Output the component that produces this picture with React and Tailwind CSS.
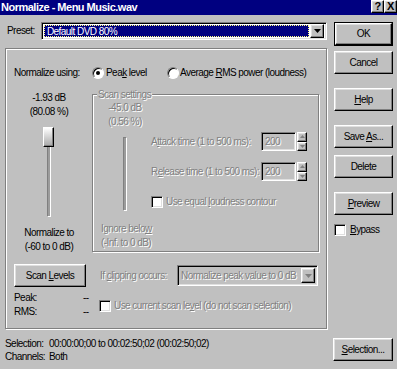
import React from 'react';

const raised =
  'border border-t-white border-l-white border-r-black border-b-black shadow-[inset_-1px_-1px_0_#808080,inset_1px_1px_0_#dfdfdf] bg-[#c0c0c0]';
const sunken =
  'border border-t-[#808080] border-l-[#808080] border-r-white border-b-white shadow-[inset_1px_1px_0_#000,inset_-1px_-1px_0_#dfdfdf]';
const etched = 'border border-[#808080] shadow-[1px_1px_0_#fff,inset_1px_1px_0_#fff]';
const dis = 'text-[#808080] [text-shadow:1px_1px_0_#fff]';

const Btn = ({ children, className = '' }) => (
  <div className={`${raised} flex items-center justify-center ${className}`}>{children}</div>
);

const Check = ({ className = '' }) => (
  <div className={`${sunken} w-[12px] h-[12px] bg-white shrink-0 ${className}`} />
);

const Radio = ({ on }) => (
  <div className="w-[12px] h-[12px] shrink-0 rounded-full bg-white border border-t-[#808080] border-l-[#808080] border-r-white border-b-white shadow-[inset_1px_1px_0_#000] flex items-center justify-center">
    {on && <div className="w-[4px] h-[4px] rounded-full bg-black" />}
  </div>
);

const Arrow = ({ color = '#000' }) => (
  <svg width="7" height="4" viewBox="0 0 7 4">
    <path d="M0 0h7L3.5 4z" fill={color} />
  </svg>
);

const Spin = () => (
  <div className="flex flex-col w-[10px] h-[19px] ml-[1px]">
    <div className={`${raised} flex-1 flex items-center justify-center`}>
      <svg width="5" height="3" viewBox="0 0 5 3"><path d="M0 3h5L2.5 0z" fill="#808080" /></svg>
    </div>
    <div className={`${raised} flex-1 flex items-center justify-center`}>
      <svg width="5" height="3" viewBox="0 0 5 3"><path d="M0 0h5L2.5 3z" fill="#808080" /></svg>
    </div>
  </div>
);

const SpinField = () => (
  <div className="flex items-center">
    <div className={`${sunken} w-[35px] h-[19px] bg-[#c0c0c0] pl-[3px] leading-[17px] ${dis}`}>200</div>
    <Spin />
  </div>
);

const Slider = ({ disabled, h }) => (
  <div className="relative mx-auto w-[4px]" style={{ height: h }}>
    <div className="w-[4px] h-full bg-[#9c9c9c] border-l border-t border-[#808080] border-r border-r-white border-b border-b-white" />
    {!disabled && (
      <div className="absolute top-[-1px] left-[-4px] w-[11px] h-[20px] border border-t-white border-l-white border-r-black border-b-black bg-gradient-to-b from-white to-[#a8a8a8] shadow-[inset_-1px_-1px_0_#808080]" />
    )}
  </div>
);

export default function App() {
  return (
    <div className="w-[397px] h-[369px] bg-[#c0c0c0] overflow-hidden flex flex-col whitespace-nowrap text-[10px] tracking-[-0.55px] leading-[14px] text-black font-['Liberation_Sans',Arial,sans-serif]">
      {/* title bar */}
      <div className="h-[15px] bg-[#000080] flex justify-between shrink-0">
        <div className="pl-[1px] text-white font-bold leading-[14px] text-[11px] tracking-[-0.5px]">Normalize - Menu Music.wav</div>
        <div className="flex">
          <Btn className="w-[13px] h-[13px] font-bold text-[11px] leading-none">?</Btn>
          <Btn className="w-[13px] h-[13px] font-bold text-[11px] leading-none">X</Btn>
        </div>
      </div>

      <div className="flex flex-1">
        {/* left column */}
        <div className="ml-[5px] w-[322px] flex flex-col">
          <div className="mt-[7px] h-[18px] flex items-center">
            <div className="w-[36px] pl-[2px]">Preset:</div>
            <div className={`${sunken} w-[287px] h-[18px] bg-white flex items-center p-[2px]`}>
              <div className="flex-1 h-full bg-[#000080] border border-dotted border-[#ffff80] text-white pl-[2px] leading-[12px]">
                Default DVD 80%
              </div>
              <Btn className="w-[14px] h-[14px] ml-[1px]"><Arrow /></Btn>
            </div>
          </div>

          {/* main group */}
          <div className={`${etched} mt-[8px] h-[281px] w-[322px]`}>
            <div className="mt-[17px] h-[14px] flex items-center pl-[8px]">
              <div className="w-[78px]">Normalize using:</div>
              <div className="w-[75px] flex items-center">
                <Radio on />
                <span className="ml-[2px]">Pea<u>k</u> level</span>
              </div>
              <div className="flex items-center">
                <Radio />
                <span className="ml-[1px]">Average <u>R</u>MS power (loudness)</span>
              </div>
            </div>

            <div className="h-[174px] flex">
              {/* level slider */}
              <div className="w-[86px] pt-[11px] text-center">
                <div>-1.93 dB</div>
                <div>(80.08 %)</div>
                <div className="mt-[9px]"><Slider h={89} /></div>
                <div className="mt-[9px]">Normalize to</div>
                <div>(-60 to 0 dB)</div>
              </div>

              {/* scan settings */}
              <div className={`${etched} relative mt-[14px] h-[158px] w-[227px] flex`}>
                <div className={`absolute top-[-7px] left-[4px] px-[1px] bg-[#c0c0c0] ${dis}`}>Scan settings</div>
                <div className={`w-[58px] pt-[6px] ${dis}`}>
                  <div className="pl-[6px] text-center">-45.0 dB</div>
                  <div className="pl-[6px] text-center">(0.56 %)</div>
                  <div className="mt-[8px] pl-[6px]"><Slider disabled h={74} /></div>
                  <div className="mt-[11px] pl-[8px]">Ignore belo<u>w</u></div>
                  <div className="pl-[8px]">(-Inf. to 0 dB)</div>
                </div>
                <div className="flex-1 pt-[37px]">
                  <div className="flex items-center h-[19px]">
                    <div className={`w-[110px] ${dis}`}>A<u>t</u>tack time (1 to 500 ms):</div>
                    <SpinField />
                  </div>
                  <div className="flex items-center h-[19px] mt-[11px]">
                    <div className={`w-[110px] ${dis}`}>R<u>e</u>lease time (1 to 500 ms):</div>
                    <SpinField />
                  </div>
                  <div className="flex items-center mt-[14px]">
                    <Check className="bg-[#c0c0c0]" />
                    <span className={`ml-[3px] ${dis}`}>Use equal <u>l</u>oudness contour</span>
                  </div>
                </div>
              </div>
            </div>

            <div className="mt-[10px] flex items-center pl-[8px]">
              <Btn className="w-[72px] h-[23px]"><span>Scan <u>L</u>evels</span></Btn>
              <div className={`ml-[14px] w-[77px] ${dis}`}>If <u>c</u>lipping occurs:</div>
              <div className={`${sunken} w-[141px] h-[21px] bg-[#c0c0c0] flex items-center p-[2px]`}>
                <div className={`flex-1 pl-[1px] ${dis}`}>Normalize peak value to 0 dB</div>
                <Btn className="w-[14px] h-[15px]"><Arrow color="#808080" /></Btn>
              </div>
            </div>

            <div className="mt-[4px] flex pl-[8px]">
              <div className="w-[78px] grid grid-cols-[69px_1fr]">
                <div>Peak:</div>
                <div>--</div>
                <div>RMS:</div>
                <div>--</div>
              </div>
              <div className="mt-[9px] flex items-center h-[12px] ml-[7px]">
                <Check className="bg-[#c0c0c0]" />
                <span className={`ml-[3px] ${dis}`}>Use current scan le<u>v</u>el (do not scan selection)</span>
              </div>
            </div>
          </div>

          <div className="mt-[8px] grid grid-cols-[44px_1fr] leading-[13px]">
            <div>Selection:</div>
            <div>00:00:00;00 to 00:02:50;02 (00:02:50;02)</div>
            <div>Channels:</div>
            <div>Both</div>
          </div>
        </div>

        {/* right buttons */}
        <div className="ml-[7px] w-[59px] flex flex-col">
          <div className="mt-[7px] h-[24px] border border-black">
            <Btn className="w-full h-full">OK</Btn>
          </div>
          <Btn className="mt-[5px] h-[23px]">Cancel</Btn>
          <Btn className="mt-[14px] h-[23px]"><span><u>H</u>elp</span></Btn>
          <Btn className="mt-[14px] h-[23px]"><span>Save <u>A</u>s...</span></Btn>
          <Btn className="mt-[7px] h-[23px]">Delete</Btn>
          <Btn className="mt-[14px] h-[23px]"><span><u>P</u>review</span></Btn>
          <div className="mt-[8px] flex items-center">
            <Check />
            <span className="ml-[4px]"><u>B</u>ypass</span>
          </div>
          <Btn className="mt-auto mb-[8px] -ml-[1px] w-[60px] h-[23px]"><span><u>S</u>election...</span></Btn>
        </div>
      </div>
    </div>
  );
}
